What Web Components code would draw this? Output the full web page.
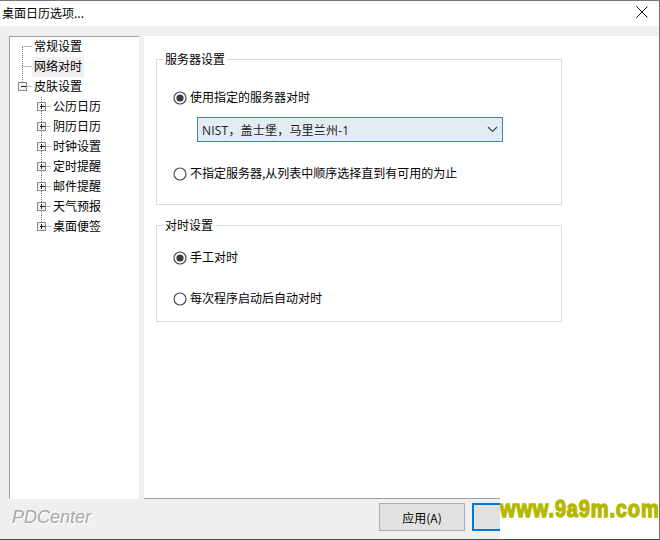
<!DOCTYPE html>
<html>
<head>
<meta charset="utf-8">
<title>桌面日历选项</title>
<style>
  html, body { margin: 0; padding: 0; background: #fff; }
  body { font: 12px "Noto Sans CJK SC", "Liberation Sans", sans-serif; color: #000; }
</style>
</head>
<body>
<template id="tree-item-tpl">
  <style>
    :host { display: flex; height: 20px; align-items: flex-start; }
    svg { width: 24px; height: 20px; flex: none; display: block; }
    :host([child]) svg { width: 43px; }
    .label { padding: 0 2px 2px; margin-left: -2px; line-height: 18px; white-space: nowrap; }
    :host([selected]) .label { background: #efefef; }
  </style>
  <svg></svg>
  <span class="label"><slot></slot></span>
</template>

<template id="radio-tpl">
  <style>
    :host { display: flex; align-items: center; gap: 3px; height: 16px; white-space: nowrap; }
    svg { width: 14px; height: 14px; flex: none; }
    span { line-height: 14px; height: 14px; margin-top: -2px; }
  </style>
  <svg viewBox="0 0 14 14">
    <circle cx="7" cy="7" r="6" fill="#fff" stroke="#505050" stroke-width="1.2"/>
    <circle class="dot" cx="7" cy="7" r="3.6" fill="#3c3c3c"/>
  </svg>
  <span><slot></slot></span>
</template>

<template id="group-tpl">
  <style>
    :host { display: block; position: relative; box-sizing: border-box; border: 1.5px solid #dcdcdc; width: 406px; }
    .legend { position: absolute; left: 6px; top: -9px; padding: 0 2px; background: #fff; line-height: 16px; }
  </style>
  <div class="legend"></div>
  <slot></slot>
</template>

<template id="select-tpl">
  <style>
    :host { display: flex; align-items: center; justify-content: space-between; box-sizing: border-box; width: 306px; height: 25px; border: 1px solid #3a83c6; background: #e3ebf3; padding: 0 4px; font-family: "Open Sans", "Noto Sans CJK SC", sans-serif; color: #222; letter-spacing: .2px; }
    svg { width: 11px; height: 7px; }
  </style>
  <span><slot></slot></span>
  <svg viewBox="0 0 11 7"><path d="M1 1l4.5 4.5L10 1" fill="none" stroke="#444" stroke-width="1.1"/></svg>
</template>

<template id="button-tpl">
  <style>
    :host { display: flex; align-items: center; justify-content: center; box-sizing: border-box; width: 86px; height: 28px; background: #e1e1e1; border: 1px solid #adadad; }
    :host([primary]) { border: 2px solid #0078d7; }
  </style>
  <slot></slot>
</template>

<template id="mark-tpl">
  <style>
    :host { position: absolute; left: 500px; top: 478px; width: 160px; height: 62px; background: #fff; box-sizing: border-box; padding-top: 19px; white-space: nowrap; font: bold 20px "Liberation Sans", sans-serif; letter-spacing: .85px; color: #b5b800; -webkit-text-stroke: 1.2px #b5b800; overflow: hidden; }
    span { display: inline-block; transform: scaleY(1.15); }
  </style>
  <span><slot></slot></span>
</template>

<template id="dialog-tpl">
  <style>
    :host { display: flex; flex-direction: column; position: relative; box-sizing: border-box; width: 660px; height: 540px; overflow: hidden; border-top: 1px solid #777; border-bottom: 1px solid #2c5268; border-right: 1px solid #707070; background: #efefef; }
    .title { flex: none; height: 25px; background: #fff; display: flex; align-items: center; justify-content: space-between; padding: 0 11px 3px 2px; box-sizing: border-box; }
    .title svg { width: 12px; height: 12px; }
    .main { flex: none; height: 473px; padding-top: 10px; box-sizing: border-box; display: flex; gap: 5px; }
    .nav { flex: none; width: 130px; margin-left: 9px; box-sizing: border-box; background: #fff; border-left: 1px solid #a0a0a0; border-top: 1px solid #a0a0a0; }
    .panel { flex: 1; background: #fff; border-bottom: 1px solid #a0a0a0; }
    .foot { flex: 1; display: flex; align-items: center; padding-left: 12px; }
    .brand { flex: none; width: 80px; margin-top: -3px; font: italic 18px "Liberation Sans", sans-serif; color: #a8a8a8; text-shadow: 1px 1px 0 #fff; }
  </style>
  <div class="title"><slot name="title"></slot>
    <svg viewBox="0 0 12 12"><path d="M.5.5l11 11M11.5.5l-11 11" stroke="#111" fill="none"/></svg>
  </div>
  <div class="main">
    <div class="nav"><slot name="nav"></slot></div>
    <div class="panel"><slot name="panel"></slot></div>
  </div>
  <div class="foot">
    <span class="brand">PDCenter</span>
    <slot name="buttons"></slot>
  </div>
  <slot name="overlay"></slot>
</template>

<pd-dialog>
  <span slot="title">桌面日历选项...</span>

  <div slot="nav">
    <tree-item line="mid">常规设置</tree-item>
    <tree-item line="mid" selected>网络对时</tree-item>
    <tree-item toggle="minus" line="end">皮肤设置</tree-item>
    <tree-item child toggle="plus" line="mid">公历日历</tree-item>
    <tree-item child toggle="plus" line="mid">阴历日历</tree-item>
    <tree-item child toggle="plus" line="mid">时钟设置</tree-item>
    <tree-item child toggle="plus" line="mid">定时提醒</tree-item>
    <tree-item child toggle="plus" line="mid">邮件提醒</tree-item>
    <tree-item child toggle="plus" line="mid">天气预报</tree-item>
    <tree-item child toggle="plus" line="end">桌面便签</tree-item>
  </div>

  <div slot="panel" style="padding:23px 0 0 12px; display:flex; flex-direction:column; gap:20px">
    <group-box legend="服务器设置" style="height:146px; padding:30px 0 0 16px">
      <radio-option checked>使用指定的服务器对时</radio-option>
      <drop-select style="margin:11px 0 0 24px">NIST，盖士堡，马里兰州-1</drop-select>
      <radio-option style="margin-top:24px">不指定服务器,从列表中顺序选择直到有可用的为止</radio-option>
    </group-box>
    <group-box legend="对时设置" style="height:97px; padding:24px 0 0 16px">
      <radio-option checked>手工对时</radio-option>
      <radio-option style="margin-top:25px">每次程序启动后自动对时</radio-option>
    </group-box>
  </div>

  <div slot="buttons" style="display:flex; gap:7px; margin-left:287px; margin-top:-4px">
    <dlg-button>应用(A)</dlg-button>
    <dlg-button primary></dlg-button>
  </div>

  <water-mark slot="overlay">www.9a9m.com</water-mark>
</pd-dialog>

<script>
  function fromTemplate(id) {
    return class extends HTMLElement {
      constructor() {
        super();
        this.attachShadow({ mode: "open" });
        this.shadowRoot.appendChild(document.getElementById(id).content.cloneNode(true));
      }
    };
  }

  customElements.define("pd-dialog", fromTemplate("dialog-tpl"));
  customElements.define("drop-select", fromTemplate("select-tpl"));
  customElements.define("dlg-button", fromTemplate("button-tpl"));
  customElements.define("water-mark", fromTemplate("mark-tpl"));

  class GroupBox extends fromTemplate("group-tpl") {
    connectedCallback() {
      this.shadowRoot.querySelector(".legend").textContent = this.getAttribute("legend");
    }
  }
  customElements.define("group-box", GroupBox);

  class RadioOption extends fromTemplate("radio-tpl") {
    connectedCallback() {
      if (!this.hasAttribute("checked")) this.shadowRoot.querySelector(".dot").remove();
    }
  }
  customElements.define("radio-option", RadioOption);

  class TreeItem extends fromTemplate("tree-item-tpl") {
    connectedCallback() {
      const child = this.hasAttribute("child");
      const toggle = this.getAttribute("toggle");
      const end = this.getAttribute("line") === "end";
      const x = child ? 31 : 12; // connector column, nav content starts at x=10
      const w = child ? 43 : 24;
      const dots = `stroke="#777" stroke-dasharray="1 1" fill="none"`;
      let s = "";
      // first row starts at its own centre, the others come from the row above
      const top = !child && !this.previousElementSibling ? 10 : 0;
      s += `<path d="M${x + .5} ${top}V${end ? 10 : 20}" ${dots}/>`;
      s += `<path d="M${x + .5} 9.5H${x + 10}" ${dots}/>`;
      if (toggle) {
        s += `<rect x="${x - 3.5}" y="5.5" width="8" height="8" fill="#f2f2f2" stroke="#8a8a8a"/>`;
        s += `<path d="M${x - 1} 9.5h5" stroke="#222"/>`;
        if (toggle === "plus") s += `<path d="M${x + .5} 7v5" stroke="#222"/>`;
      }
      const svg = this.shadowRoot.querySelector("svg");
      svg.setAttribute("viewBox", `0 0 ${w} 20`);
      svg.innerHTML = s;
    }
  }
  customElements.define("tree-item", TreeItem);
</script>
</body>
</html>
